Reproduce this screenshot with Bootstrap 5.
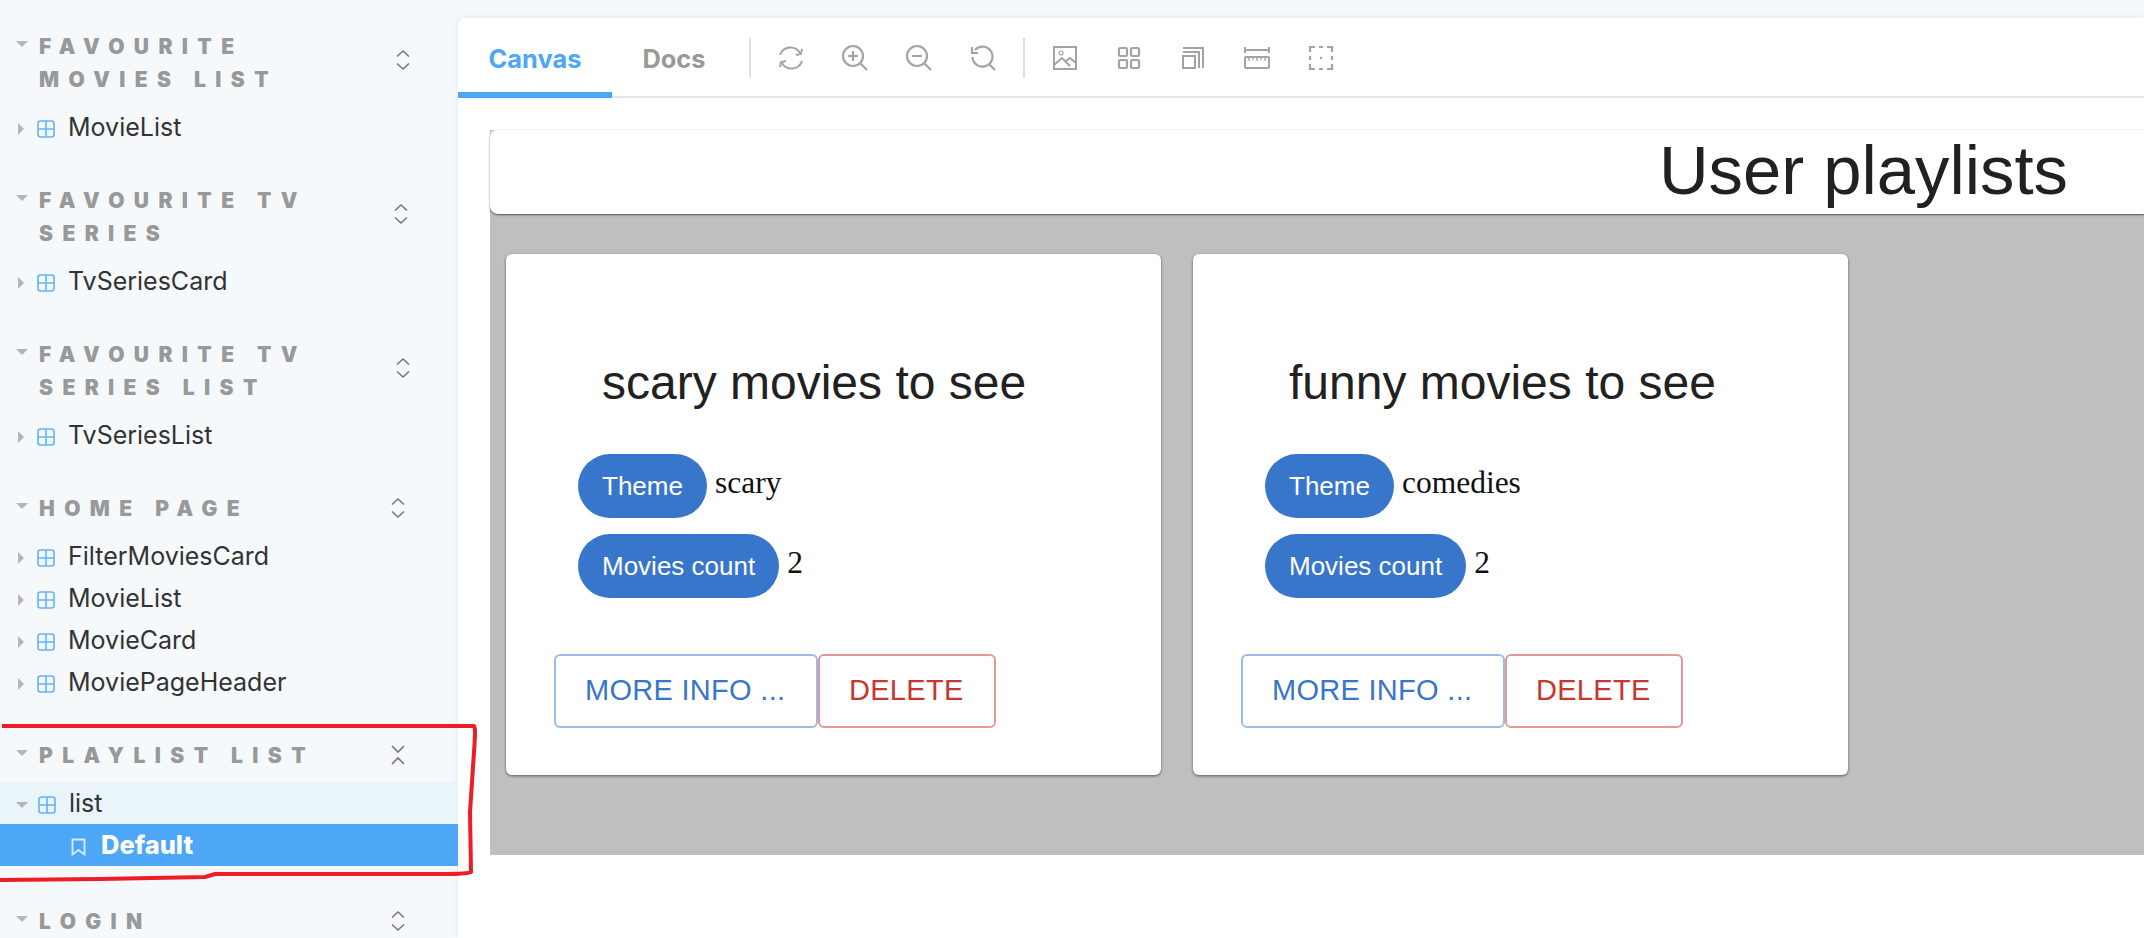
<!doctype html>
<html lang="en">
<head>
<meta charset="utf-8">
<title>Storybook</title>
<link rel="stylesheet" href="https://cdn.jsdelivr.net/npm/bootstrap@5.3.0/dist/css/bootstrap.min.css">
<style>
html,body{height:938px;overflow:hidden}
body{background:#f6f9fc;font-family:"Inter","Noto Sans",sans-serif;color:#333}
.sb-shell{height:938px}
.sb-side{width:458px;flex:none;padding-top:29px;position:relative}
.sb-group{margin-bottom:35.5px}
.sb-group-last{margin-bottom:38px}
.sb-head{display:flex;padding:1px 0 0 16px;color:#999;font-weight:900;font-size:21px;line-height:33px;letter-spacing:9.4px;text-transform:uppercase;margin-bottom:9.5px}
.sb-tri{width:0;height:0;border-left:6px solid transparent;border-right:6px solid transparent;border-top:6px solid #b5b5b5;margin:11px 11px 0 0;flex:none}
.sb-label{width:300px;flex:none}
.sb-updown{flex:none;width:16px;height:22px;margin-top:5px}
.sb-ud-wide{margin-left:56px;margin-top:19px}
.sb-ud-mid{margin-left:54px;margin-top:19px}
.sb-ud-short{margin-left:51px}
.sb-row{display:flex;align-items:center;height:42px;font-size:25px;color:#333;padding:2px 0 0 18px}
.sb-row .sb-arrow{width:0;height:0;border-top:6px solid transparent;border-bottom:6px solid transparent;border-left:6px solid #b5b5b5;margin:3px 13px 0 0;flex:none}
.sb-row .sb-arrow-down{width:0;height:0;border-left:6px solid transparent;border-right:6px solid transparent;border-top:6px solid #b5b5b5;margin:3px 10px 0 -2px;flex:none}
.sb-row svg.sb-comp{width:18px;height:18px;margin:3px 13px 0 0;flex:none}
.sb-row-open{background:#e9f4fb}
.sb-row-sel{background:#4da6f6;color:#fff;font-weight:800;padding-left:71px;font-size:25.5px}
.sb-row-sel svg{width:15px;height:18px;margin:3px 15px 0 0;flex:none}
.sb-ink{position:absolute;left:0;top:722px;pointer-events:none}
.sb-main{flex:1;min-width:0;margin-top:18px;background:#fff;border-top-left-radius:8px;box-shadow:0 0 6px rgba(0,0,0,.08);overflow:hidden}
.sb-bar{height:80px;border-bottom:2px solid #e6e6e6;display:flex;align-items:flex-start}
.sb-tab{height:80px;padding-top:24px;font-size:25.4px;font-weight:700;color:#999;line-height:1.3;text-align:center}
.sb-tab-on{width:154px;color:#4da6f6;border-bottom:6px solid #4da6f6}
.sb-tab-off{width:124px}
.sb-sep{width:2px;height:40px;background:#e0e0e0;margin:20px 0 0 13px;flex:none}
.sb-sep-b{margin-left:26px}
.sb-tool{width:28px;height:28px;margin:26px 0 0 36px;flex:none;display:block}
.sb-tool-first{margin-left:26px}
.sb-canvas{padding:32px 0 0 32px}
.sb-grey{background:#bfbfbf;height:725px}
.sb-pagehead{height:84px;border-radius:8px 0 0 8px;background:#fff;box-shadow:0 1px 2px rgba(0,0,0,.6),0 -1px 0 #f7f7f7;display:flex;align-items:center;justify-content:flex-end;padding:0 76px 2px 0}
.sb-pagehead h1{margin:0;font-family:"Liberation Sans",Arial,sans-serif;font-weight:400;font-size:68.8px;line-height:1;color:#212121}
.sb-cards{padding:40px 16px 0;display:flex;gap:32px;align-items:flex-start}
.sb-movie{width:655px;height:521px;background:#fff;border-radius:6px;box-shadow:0 1px 3px rgba(0,0,0,.55);font-family:"Liberation Sans",Arial,sans-serif}
.sb-movie h2{margin:0;font-weight:400;font-size:48px;line-height:1.2;color:#212121;padding:100px 0 0 96px;height:200px}
.sb-info{display:flex;align-items:flex-start;padding-left:72px;height:64px;margin-bottom:16px}
.sb-pill{background:#3776cb;color:#fff;height:64px;border-radius:32px;padding:0 24px;display:flex;align-items:center;font-size:26px}
.sb-val{font-family:"Liberation Serif","Times New Roman",serif;font-size:31.5px;color:#111;margin-left:8px;line-height:1;margin-top:13px}
.sb-actions{display:flex;padding-left:48px;margin-top:56px}
.sb-btn{height:74px;background:#fff;border:2px solid;border-radius:6px;font-size:29px;padding:0 29px;display:flex;align-items:center;letter-spacing:.01em}
.sb-btn-blue{color:#3776cb;border-color:#9bbbe8;width:264px}
.sb-btn-red{color:#c6372f;border-color:#e39a96;width:178px}
</style>
</head>
<body>
<div class="d-flex sb-shell">
  <aside class="sb-side">
    <svg width="0" height="0" class="d-block position-absolute">
      <defs>
        <symbol id="sb-comp-ic" viewBox="0 0 18 18"><rect x="1" y="1" width="16" height="16" rx="2.5" fill="none" stroke="#63b3f8" stroke-width="1.6"/><path d="M9 1v16M1 9h16" stroke="#63b3f8" stroke-width="1.6"/></symbol>
        <symbol id="sb-ud" viewBox="0 0 16 22"><path d="M2 7.5 8 2l6 5.5M2 14.5 8 20l6-5.5" fill="none" stroke="#777" stroke-width="1.6"/></symbol>
        <symbol id="sb-ud-close" viewBox="0 0 16 22"><path d="M2 2l6 6 6-6M2 20l6-6 6 6" fill="none" stroke="#777" stroke-width="1.6"/></symbol>
      </defs>
    </svg>
    <div class="sb-group">
      <div class="sb-head"><span class="sb-tri"></span><span class="sb-label">Favourite movies list</span><svg class="sb-updown sb-ud-wide"><use href="#sb-ud"/></svg></div>
      <div class="sb-row"><span class="sb-arrow"></span><svg class="sb-comp"><use href="#sb-comp-ic"/></svg>MovieList</div>
    </div>
    <div class="sb-group">
      <div class="sb-head"><span class="sb-tri"></span><span class="sb-label">Favourite TV series</span><svg class="sb-updown sb-ud-mid"><use href="#sb-ud"/></svg></div>
      <div class="sb-row"><span class="sb-arrow"></span><svg class="sb-comp"><use href="#sb-comp-ic"/></svg>TvSeriesCard</div>
    </div>
    <div class="sb-group">
      <div class="sb-head"><span class="sb-tri"></span><span class="sb-label">Favourite TV series list</span><svg class="sb-updown sb-ud-wide"><use href="#sb-ud"/></svg></div>
      <div class="sb-row"><span class="sb-arrow"></span><svg class="sb-comp"><use href="#sb-comp-ic"/></svg>TvSeriesList</div>
    </div>
    <div class="sb-group">
      <div class="sb-head"><span class="sb-tri"></span><span class="sb-label">Home page</span><svg class="sb-updown sb-ud-short"><use href="#sb-ud"/></svg></div>
      <div class="sb-row"><span class="sb-arrow"></span><svg class="sb-comp"><use href="#sb-comp-ic"/></svg>FilterMoviesCard</div>
      <div class="sb-row"><span class="sb-arrow"></span><svg class="sb-comp"><use href="#sb-comp-ic"/></svg>MovieList</div>
      <div class="sb-row"><span class="sb-arrow"></span><svg class="sb-comp"><use href="#sb-comp-ic"/></svg>MovieCard</div>
      <div class="sb-row"><span class="sb-arrow"></span><svg class="sb-comp"><use href="#sb-comp-ic"/></svg>MoviePageHeader</div>
    </div>
    <div class="sb-group sb-group-last">
      <div class="sb-head"><span class="sb-tri"></span><span class="sb-label">Playlist list</span><svg class="sb-updown sb-ud-short"><use href="#sb-ud-close"/></svg></div>
      <div class="sb-row sb-row-open"><span class="sb-arrow-down"></span><svg class="sb-comp"><use href="#sb-comp-ic"/></svg>list</div>
      <div class="sb-row sb-row-sel"><svg viewBox="0 0 15 18"><path d="M1.500 1.500h12v15l-6-4.500-6 4.500z" fill="none" stroke="#d8ecfd" stroke-width="1.800"/></svg>Default</div>
    </div>
    <div class="sb-group">
      <div class="sb-head"><span class="sb-tri"></span><span class="sb-label">Login</span><svg class="sb-updown sb-ud-short"><use href="#sb-ud"/></svg></div>
    </div>
    <svg class="sb-ink" width="480" height="170" viewBox="0 0 480 170"><path d="M2 4H474Q476 4 474 30L470 90 471 150Q470 152 440 152H215L205 155 100 157 0 158" fill="none" stroke="#ee1c25" stroke-width="4" stroke-linejoin="round"/></svg>
  </aside>
  <main class="sb-main">
    <div class="sb-bar">
      <div class="sb-tab sb-tab-on">Canvas</div>
      <div class="sb-tab sb-tab-off">Docs</div>
      <span class="sb-sep"></span>
      <svg class="sb-tool sb-tool-first" viewBox="0 0 28 28" fill="none" stroke="#a3a3a3" stroke-width="2"><path d="M3 11a11 11 0 0 1 20-2M25 17a11 11 0 0 1-20 2"/><path d="M19 11l5-1 1-5M9 17l-5 1-1 5"/></svg>
      <svg class="sb-tool" viewBox="0 0 28 28" fill="none" stroke="#a3a3a3" stroke-width="2.200"><circle cx="12" cy="12" r="10"/><path d="M19 19l7 7M12 7v10M7 12h10"/></svg>
      <svg class="sb-tool" viewBox="0 0 28 28" fill="none" stroke="#a3a3a3" stroke-width="2.200"><circle cx="12" cy="12" r="10"/><path d="M19 19l7 7M7 12h10"/></svg>
      <svg class="sb-tool" viewBox="0 0 28 28" fill="none" stroke="#a3a3a3" stroke-width="2.200"><path d="M6 6a10 10 0 1 1-2.500 7"/><path d="M3 3v6h6"/><path d="M20 20l6 6"/></svg>
      <span class="sb-sep sb-sep-b"></span>
      <svg class="sb-tool sb-tool-first" viewBox="0 0 28 28" fill="none" stroke="#a3a3a3" stroke-width="2"><rect x="3" y="3" width="22" height="22"/><circle cx="10" cy="9" r="2" stroke-width="1.200"/><path d="M3 21l8-7 8 8M15 17l4-3 6 5"/></svg>
      <svg class="sb-tool" viewBox="0 0 28 28" fill="none" stroke="#a3a3a3" stroke-width="2.200"><rect x="4" y="4" width="8" height="8" rx="1"/><rect x="16" y="4" width="8" height="8" rx="1"/><rect x="4" y="16" width="8" height="8" rx="1"/><rect x="16" y="16" width="8" height="8" rx="1"/></svg>
      <svg class="sb-tool" viewBox="0 0 28 28" fill="none" stroke="#a3a3a3" stroke-width="2"><rect x="4" y="12" width="12" height="12"/><path d="M4 8h16v16M4 4h20v20"/></svg>
      <svg class="sb-tool" viewBox="0 0 28 28" fill="none" stroke="#a3a3a3" stroke-width="2"><path d="M2 3v6M26 3v6M2 6h24"/><rect x="2" y="13" width="24" height="11" rx="1"/><path d="M6 13v4M10 13v3M14 13v4M18 13v3M22 13v4" stroke-width="1.400"/></svg>
      <svg class="sb-tool" viewBox="0 0 28 28" fill="none" stroke="#a3a3a3" stroke-width="2.200"><path d="M3 8V3h5M12 3h4M20 3h5v5M25 12v4M25 20v5h-5M16 25h-4M8 25H3v-5M3 16v-4"/><circle cx="14" cy="14" r="1.200" fill="#a3a3a3" stroke="none"/></svg>
    </div>
    <div class="sb-canvas">
      <div class="sb-grey">
        <div class="sb-pagehead"><h1>User playlists</h1></div>
        <div class="sb-cards">
          <div class="sb-movie">
            <h2>scary movies to see</h2>
            <div class="sb-info"><span class="sb-pill">Theme</span><span class="sb-val">scary</span></div>
            <div class="sb-info"><span class="sb-pill">Movies count</span><span class="sb-val">2</span></div>
            <div class="sb-actions"><span class="sb-btn sb-btn-blue">MORE INFO ...</span><span class="sb-btn sb-btn-red">DELETE</span></div>
          </div>
          <div class="sb-movie">
            <h2>funny movies to see</h2>
            <div class="sb-info"><span class="sb-pill">Theme</span><span class="sb-val">comedies</span></div>
            <div class="sb-info"><span class="sb-pill">Movies count</span><span class="sb-val">2</span></div>
            <div class="sb-actions"><span class="sb-btn sb-btn-blue">MORE INFO ...</span><span class="sb-btn sb-btn-red">DELETE</span></div>
          </div>
        </div>
      </div>
    </div>
  </main>
</div>
<script src="https://cdn.jsdelivr.net/npm/bootstrap@5.3.0/dist/js/bootstrap.bundle.min.js"></script>
</body>
</html>
